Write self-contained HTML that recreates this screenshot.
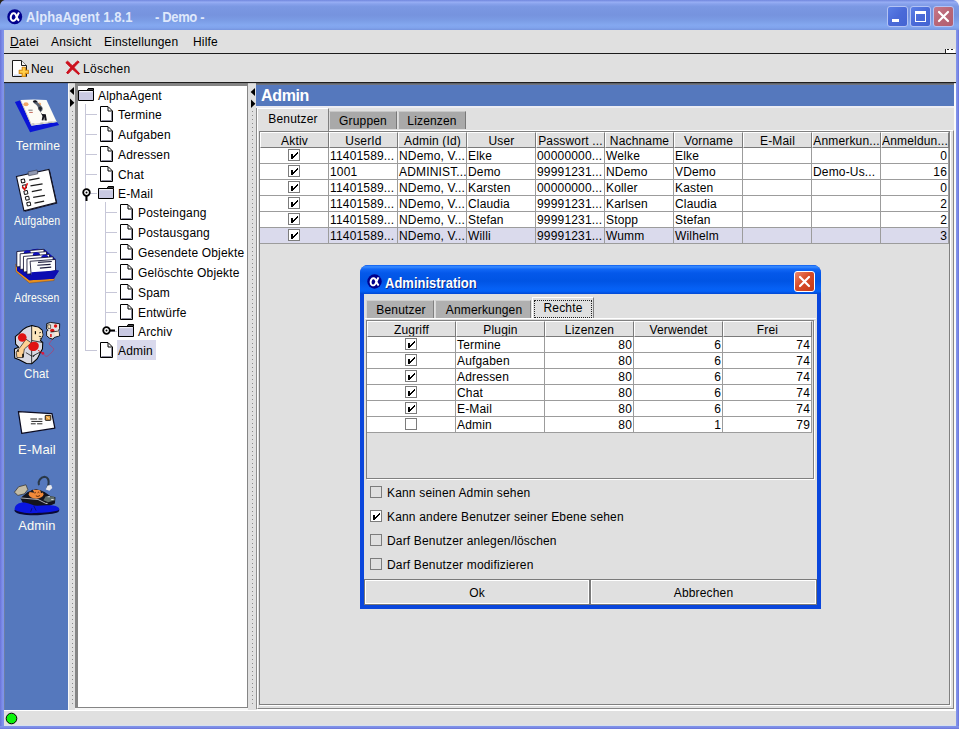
<!DOCTYPE html>
<html>
<head>
<meta charset="utf-8">
<title>AlphaAgent</title>
<style>
*{box-sizing:border-box;margin:0;padding:0}
html,body{width:959px;height:729px;overflow:hidden;background:#7486e2}
body{font-family:"Liberation Sans",sans-serif;font-size:12px;line-height:16px;color:#000;position:relative;letter-spacing:.17px}
.a{position:absolute}
svg{position:absolute;overflow:visible}
#title{left:0;top:0;width:959px;height:30px;background:linear-gradient(#748ade 0,#7e94e6 3%,#98aef4 7%,#88a2ec 13%,#7b98e3 22%,#7693de 50%,#7b9ce5 68%,#84a8f0 84%,#80a3ec 93%,#7694de 100%)}
#title .t{top:10px;color:#dfe8fb;font-weight:bold;font-size:13px;letter-spacing:.07px;white-space:pre;line-height:16px;transform:scaleY(1.09);transform-origin:0 12px}
#frameL{left:0;top:30px;width:4px;height:699px;background:linear-gradient(90deg,#6a74d8,#7d8eea 60%,#8296e8)}
#frameR{left:956px;top:30px;width:3px;height:699px;background:linear-gradient(90deg,#8296e8,#7d8eea 40%,#6a74d8)}
#frameB{left:0;top:726px;width:959px;height:3px;background:linear-gradient(#8296e8,#7b8ae6 50%,#6a74d8)}
#menubar{left:4px;top:30px;width:952px;height:23px;background:#e0e0e0}
#menubar span{position:absolute;top:4px}
#ml1{left:4px;top:53px;width:952px;height:1px;background:#1c1c1c}
#toolbar{left:4px;top:54px;width:952px;height:28px;background:#e0e0e0}
#toolbar span{position:absolute;top:7px}
#ml2{left:4px;top:82px;width:952px;height:1px;background:#1e1e1e}
#ml3{left:4px;top:83px;width:952px;height:1px;background:linear-gradient(90deg,#4f6ca8 0 64px,#c8c8c8 64px 71px,#808080 71px 244px,#c8c8c8 244px 252px,#5c6068 252px 950px,#ddd 950px)}
#sidebar{left:4px;top:84px;width:64px;height:626px;background:#5578bd;border-left:1px solid #6c7fa6}
.lbl{position:absolute;left:0;width:64px;text-align:center;color:#fdfdf4;font-size:12px;white-space:nowrap}
.lbl b{display:inline-block;font-weight:normal;transform-origin:50% 50%}
.divd{background:#e0e0e0}
#tree{left:75px;top:84px;width:173px;height:624px;background:#fff;border:solid #858585;border-width:2px 1px 1px 3px;box-shadow:0 2px 0 #f6f6f6}
.tr{position:absolute;left:0;white-space:nowrap}
.tr span{position:absolute;top:0;padding:0 1px}
#main{left:256px;top:84px;width:700px;border-right:2px solid #fafafa;height:626px;background:#e0e0e0}
#hdr{left:0;top:0px;width:698px;height:22px;border-top:1px solid #70747e;background:#5578bd}
#hdr span{position:absolute;left:5px;top:1px;color:#fff;font-weight:bold;font-size:16px;line-height:20px;letter-spacing:-.35px}
#status{left:4px;top:710px;width:952px;height:16px;background:#e0e0e0;border-top:1px solid #fff;border-bottom:1px solid #d6e0ee}
table{border-collapse:separate;border-spacing:0;table-layout:fixed;position:absolute}
td,th{height:16px;line-height:15px;font-size:12px;font-weight:normal;white-space:nowrap;overflow:hidden;padding:0 0 0 1px;text-align:left}
th{background:#e0e0e0;border-top:1px solid #fff;border-left:1px solid #fff;border-right:1px solid #7a7a7a;border-bottom:1px solid #7a7a7a;text-align:center;padding:0;line-height:14px}
th div{height:14px;line-height:16px}
td{background:#fff;border:0;box-shadow:inset -1px -1px 0 #9c9c9c;line-height:16px}
td.r{text-align:right;padding:0 2px 0 0}
td.c{text-align:center;padding:0}
tr.sel td{background:#dadaec}
.cb{display:inline-block;width:12px;height:12px;border:1px solid #7c7c7c;background:#fff;vertical-align:top;margin-top:1px;position:relative}
.cb.g{background:#e0e0e0}
.cb.g.on{background:#fff}
.cb.on:after{content:"";position:absolute;left:0;top:0;width:10px;height:10px;background:
 linear-gradient(#000,#000) 2px 4px/2px 5px no-repeat,
 linear-gradient(#000,#000) 4px 6px/1px 2px no-repeat,
 linear-gradient(#000,#000) 5px 5px/1px 2px no-repeat,
 linear-gradient(#000,#000) 6px 4px/1px 2px no-repeat,
 linear-gradient(#000,#000) 7px 3px/1px 2px no-repeat,
 linear-gradient(#000,#000) 8px 2px/1px 2px no-repeat}
.tab{position:absolute;text-align:center;white-space:nowrap}
#dlg{left:360px;top:265px;width:461px;height:344px;background:#0a46dc;border-radius:8px 8px 0 0}
#dtitle{left:0;top:0;width:461px;height:29px;border-radius:8px 8px 0 0;background:linear-gradient(#0a5cf0 0,#3a8cff 6%,#1268f6 14%,#0458ea 28%,#0054e4 55%,#0660f4 80%,#0462f8 90%,#0248d4 100%)}
#dtitle .t{left:25px;top:10.5px;color:#fff;font-weight:bold;font-size:13px;letter-spacing:0;white-space:pre;line-height:16px;text-shadow:1px 1px 0 #0a2a88;transform:scaleY(1.09);transform-origin:0 12px}
#dbody{left:4px;top:29px;width:453px;height:311px;background:#e0e0e0}
.chk{position:absolute;left:6px;white-space:nowrap}
.chk .cb{position:absolute;left:0;top:0;margin:0}
.chk span{position:absolute;left:17px;top:-1px}
.btn{position:absolute;top:285px;height:26px;background:#e0e0e0;border:1px solid #7a7a7a;text-align:center;line-height:26px;box-shadow:inset 1px 1px 0 #fff,inset -1px -1px 0 #fff}
</style>
</head>
<body>
<div id="title" class="a"><svg class="a" style="left:7px;top:8.5px" width="15.5" height="15.5" viewBox="0 0 16 16"><circle cx="8" cy="8" r="7.7" fill="#00008c"/><path d="M12.3 3.6 C11.2 5.6 10.6 7.2 9.4 9.6 C8.6 11.6 6.9 12.6 5.4 11.9 C3.6 11 3.4 7.9 4.6 6 C5.6 4.3 7.6 3.9 8.7 5.4 C9.6 6.8 10.3 10.4 12.4 12.2" fill="none" stroke="#fff" stroke-width="2.1" stroke-linecap="butt"/></svg><span class="a t" style="left:26px">AlphaAgent 1.8.1</span><span class="a t" style="left:155px;letter-spacing:-.35px">- Demo -</span>
<div class="a" style="left:887px;top:6px;width:21px;height:21px;border:1px solid #b4c3f4;border-radius:3px;background:linear-gradient(135deg,#5b7fe6,#4a6ad8 50%,#4464d2)"><div class="a" style="left:4px;top:12px;width:7px;height:3px;background:#fff"></div></div><div class="a" style="left:910px;top:6px;width:21px;height:21px;border:1px solid #b4c3f4;border-radius:3px;background:linear-gradient(135deg,#5b7fe6,#4a6ad8 50%,#4464d2)"><div class="a" style="left:4px;top:4px;width:11px;height:11px;border:1px solid #fff;border-top-width:3px"></div></div><div class="a" style="left:933px;top:6px;width:21px;height:21px;border:1px solid #b4c3f4;border-radius:3px;background:linear-gradient(135deg,#c8788a,#b86676 50%,#b25e70)"><svg class="a" style="left:0;top:0" width="19" height="19"><path d="M5 5L14 14M14 5L5 14" stroke="#fff" stroke-width="2.2" stroke-linecap="round"/></svg></div>
<svg class="a" style="left:0;top:0" width="8" height="8"><path d="M0 0H4.5Q1 1 0 5Z" fill="#2a2418"/></svg><svg class="a" style="left:951px;top:0" width="8" height="8"><path d="M8 0H2.5Q7 1 8 6Z" fill="#f4f4f8"/></svg>
</div>
<div id="frameL" class="a"></div><div id="frameR" class="a"></div><div id="frameB" class="a"></div>
<div id="menubar" class="a"><span style="left:6px"><u>D</u>atei</span><span style="left:47px">Ansicht</span><span style="left:100px">Einstellungen</span><span style="left:189px">Hilfe</span><div class="a" style="left:941px;top:19px;width:10px;height:4px;background:#fff;border-left:1px solid #222"></div><div class="a" style="left:943px;top:19px;width:8px;height:1px;background:repeating-linear-gradient(90deg,#222 0 2px,transparent 2px 4px)"></div></div>
<div id="ml1" class="a"></div>
<div id="toolbar" class="a">
<svg style="left:8px;top:6px" width="18" height="18" viewBox="0 0 18 18"><path d="M0.5 0.5H9.5L14.5 5.5V16.5H0.5Z" fill="#fff" stroke="#1a1a1a" stroke-width="1"/><path d="M9.5 0.5V5.5H14.5" fill="#f4f4f4" stroke="#1a1a1a"/><path d="M2 15.3H13.3V7" fill="none" stroke="#cdd8ee" stroke-width="1.5"/><path d="M10.2 7.2h3.2v3h3v3.2h-3v3h-3.2v-3h-3v-3.2h3z" fill="#ffcf48" stroke="#d48a14" stroke-width="1.1" stroke-linejoin="round"/></svg>
<span style="left:27px">Neu</span>
<svg style="left:61px;top:6px" width="16" height="16" viewBox="0 0 16 16"><path d="M0.8 2.6L2.6 1.2C5.5 3.6 10 8.6 14.6 13.6L13.6 14.6C9.4 11 4.6 6.6 0.8 2.6Z M12.6 1L14.2 2C10.8 5.4 6 10.6 3 13.8L1.6 12.8C4.6 8.6 9 4 12.6 1Z" fill="#cc0f1c" stroke="#cc0f1c" stroke-width="1" stroke-linejoin="round"/></svg>
<span style="left:79px;letter-spacing:.3px">Löschen</span>
</div><div id="ml2" class="a"></div><div id="ml3" class="a"></div>
<div id="sidebar" class="a">
<svg style="left:7px;top:10px" width="52" height="44" viewBox="0 0 862 729"><path d="M48 132L140 104L330 520L748 468L782 512L300 632Z" fill="#0a14d8"/><path d="M140 100L360 92L572 100L742 462L322 528Z" fill="#fdfcf6"/><path d="M146 112L326 520" stroke="#c8c4bc" stroke-width="16"/><path d="M340 505L730 455" stroke="#d0ccc0" stroke-width="14"/><ellipse cx="232" cy="170" rx="42" ry="32" fill="#f2a868"/><ellipse cx="456" cy="165" rx="28" ry="26" fill="#f2b078"/><path d="M345 120C365 95 415 100 425 135C440 150 480 190 500 215C520 250 500 290 470 300L430 250C440 230 420 200 400 180C380 160 350 150 345 120Z" fill="#596270"/><path d="M345 122C362 98 412 102 422 134L372 142Z" fill="#0e0e14"/><path d="M470 300L500 330L560 335L578 440L540 440L535 380L520 440L492 435L505 365Z" fill="#14141c"/><path d="M440 225L470 205L500 235L470 290Z" fill="#20242c"/><path d="M272 268h70" stroke="#444" stroke-width="12"/><path d="M285 305h60" stroke="#b03020" stroke-width="12"/><path d="M330 495h40M470 482h50M600 468h70" stroke="#888" stroke-width="10"/></svg><svg style="left:-1px;top:81px" width="64" height="70" viewBox="0 0 667 729"><path d="M140 128L478 52L556 400L218 486Z" fill="#14142c"/><path d="M130 120L468 45L545 392L208 478Z" fill="#fefefe" stroke="#101020" stroke-width="12"/><path d="M250 72L345 52L352 92L258 112Z" fill="#9098b0" stroke="#303040" stroke-width="6"/><rect x="180" y="148" width="36" height="36" fill="#fff" stroke="#000" stroke-width="9" transform="rotate(-12 198 166)"/><rect x="195" y="208" width="36" height="36" fill="#fff" stroke="#000" stroke-width="9" transform="rotate(-12 213 226)"/><rect x="210" y="268" width="36" height="36" fill="#fff" stroke="#000" stroke-width="9" transform="rotate(-12 228 286)"/><rect x="225" y="328" width="36" height="36" fill="#fff" stroke="#000" stroke-width="9" transform="rotate(-12 243 346)"/><rect x="240" y="388" width="36" height="36" fill="#fff" stroke="#000" stroke-width="9" transform="rotate(-12 258 406)"/><path d="M262 158L370 136" stroke="#1a1a1a" stroke-width="13"/><path d="M276 218L402 196" stroke="#1a1a1a" stroke-width="13"/><path d="M290 278L394 256" stroke="#1a1a1a" stroke-width="13"/><path d="M304 338L426 316" stroke="#1a1a1a" stroke-width="13"/><path d="M318 398L418 376" stroke="#1a1a1a" stroke-width="13"/><path d="M190 225L215 255L245 190" fill="none" stroke="#e01010" stroke-width="16"/></svg><svg style="left:7px;top:160px" width="52" height="44" viewBox="0 0 862 729"><path d="M62 330L66 458L288 648L698 606L704 556L290 590L108 430Z" fill="#e8901c" stroke="#7a3c08" stroke-width="6"/><path d="M80 128L540 86L722 250L732 430L778 442L692 574L290 602L84 442Z" fill="#0c0cb2"/><ellipse cx="420" cy="104" rx="105" ry="26" fill="#1010c0"/><path d="M80 125L530 88L530 340L80 380Z" fill="#fff" stroke="#101030" stroke-width="14" stroke-linejoin="round"/><ellipse cx="255" cy="150" rx="60" ry="46" fill="#1010c0"/><path d="M135 162L572 126L572 380L135 422Z" fill="#fff" stroke="#101030" stroke-width="14" stroke-linejoin="round"/><ellipse cx="405" cy="184" rx="60" ry="46" fill="#1010c0"/><path d="M190 206L622 170L622 420L190 466Z" fill="#fff" stroke="#101030" stroke-width="14" stroke-linejoin="round"/><ellipse cx="545" cy="222" rx="60" ry="46" fill="#1010c0"/><path d="M248 246L682 212L682 450L248 502Z" fill="#fff" stroke="#101030" stroke-width="14" stroke-linejoin="round"/><path d="M300 286L720 256L722 440L318 520Z" fill="#fdfdff" stroke="#101030" stroke-width="14" stroke-linejoin="round"/><path d="M84 384L290 530L318 520L322 470L722 440L778 442L692 574L290 602L84 442Z" fill="#0c0cb2"/><path d="M432 306L660 290M420 352L640 338M462 400L650 384" stroke="#1a1a3c" stroke-width="20"/></svg><svg style="left:7px;top:236px" width="52" height="44" viewBox="0 0 862 729"><path d="M330 92L440 120L500 170L512 250L470 340L510 370L505 480L470 540L420 640L330 725L240 722L120 660L45 630L40 480L110 450L60 400L55 275L120 220L180 160L240 120Z" fill="#d9d9e2" stroke="#000" stroke-width="17" stroke-linejoin="round"/><path d="M332 110L440 130L495 178L508 250L468 336L332 340Z" fill="#fde6bc"/><path d="M326 92V722" stroke="#000" stroke-width="13"/><path d="M330 340L500 372M335 600L470 530M230 540L330 600" stroke="#000" stroke-width="12"/><path d="M232 318L322 380L205 480L182 622L82 622L70 530L150 432Z" fill="#fdd094" stroke="#000" stroke-width="10" stroke-linejoin="round"/><circle cx="170" cy="290" r="72" fill="#e01212"/><path d="M270 430C290 360 400 330 440 400C460 470 400 520 340 515C290 505 262 470 270 430Z" fill="#e01212"/><rect x="378" y="185" width="20" height="50" fill="#000"/><path d="M450 215l30 -12M445 270l40 5M470 295v30" stroke="#000" stroke-width="12"/><rect x="90" y="490" width="20" height="40" fill="#000"/><rect x="170" y="560" width="24" height="60" fill="#000"/><path d="M350 610l25 -22" stroke="#000" stroke-width="14"/><path d="M430 500L500 545" stroke="#d01818" stroke-width="14"/><circle cx="512" cy="552" r="22" fill="#e0143c"/><path d="M520 560C545 600 575 615 600 590C640 550 700 510 690 475C670 440 620 420 615 395C625 365 655 345 668 322" fill="none" stroke="#c8305c" stroke-width="10"/><path d="M575 60L640 40L790 62L788 140L770 180L790 260L700 290L680 318L620 300L575 262L572 190L600 170L572 150Z" fill="#e4e0e0" stroke="#000" stroke-width="14" stroke-linejoin="round"/><path d="M590 80h50v60h-42z" fill="#fde6bc" stroke="#000" stroke-width="9"/><circle cx="722" cy="100" r="28" fill="#e01212"/><ellipse cx="668" cy="172" rx="36" ry="28" fill="#e01212"/><path d="M700 190L770 175L780 255L720 270Z" fill="#fde6d0"/><path d="M630 230h30v50h-30z" fill="#e03030"/><path d="M640 200L760 185" stroke="#000" stroke-width="12"/></svg><svg style="left:-1px;top:311px" width="64" height="70" viewBox="0 0 667 729"><path d="M150 172L500 195L530 345L185 400Z" fill="#fefefe" stroke="#0a0a20" stroke-width="13" stroke-linejoin="round"/><rect x="430" y="212" width="58" height="52" fill="#e8a040" stroke="#000" stroke-width="9" rx="6"/><path d="M448 225l25 25" stroke="#fff0c0" stroke-width="10"/><path d="M275 250h70M360 250h40M285 275h115M280 300h50M345 300h55" stroke="#1a1a1a" stroke-width="10"/></svg><svg style="left:7px;top:388px" width="52" height="44" viewBox="0 0 862 729"><path d="M445 205C430 150 470 90 540 80C600 85 615 140 605 200L590 260" fill="none" stroke="#2a3848" stroke-width="34" stroke-linecap="round"/><path d="M40 335L110 245L232 212L262 292L205 362L98 388Z" fill="#c4bca6" stroke="#33302a" stroke-width="12" stroke-linejoin="round"/><path d="M560 290L590 225L650 215L668 265L620 310Z" fill="#e8e8ec"/><path d="M140 430L260 330L400 280L540 330L640 400L720 420L712 520L600 570L200 560Z" fill="#14141e"/><ellipse cx="400" cy="368" rx="122" ry="74" fill="#f28a3a"/><path d="M290 330L340 290L372 345Z M470 300L520 335L480 350Z" fill="#1a1a22"/><path d="M370 350q14 -22 28 0M425 345q14 -22 28 0M395 395q35 24 70 -6" fill="none" stroke="#3a1400" stroke-width="13"/><path d="M520 470L560 400L700 405L712 470L600 500Z" fill="#5e6c68"/><path d="M145 430L430 455L560 520" fill="none" stroke="#d8d8e0" stroke-width="13"/><path d="M590 410h40M650 455h40M560 520h30" stroke="#f0f0f4" stroke-width="14"/><path d="M45 600C60 530 140 495 230 510C300 520 350 560 420 560C500 550 580 545 680 555C760 565 800 600 780 640C740 690 600 690 480 700C380 715 250 705 150 690C80 680 35 650 45 600Z" fill="#0a16e0"/><path d="M40 625C120 670 260 690 400 680C520 670 700 670 785 625L770 662C700 700 560 700 470 712C360 722 220 712 130 694C70 682 38 660 40 625Z" fill="#0a0a34"/><path d="M360 560L400 640M330 600l-20 60" stroke="#0a0a50" stroke-width="12"/></svg>
<div class="lbl" style="top:54px;font-size:12.6px;left:1px"><b style="transform:scaleX(0.97)">Termine</b></div>
<div class="lbl" style="top:129px;font-size:12.4px;left:0px"><b style="transform:scaleX(0.85)">Aufgaben</b></div>
<div class="lbl" style="top:206px;font-size:12.4px;left:0px"><b style="transform:scaleX(0.84)">Adressen</b></div>
<div class="lbl" style="top:282px;font-size:12.4px;left:-1px"><b style="transform:scaleX(0.93)">Chat</b></div>
<div class="lbl" style="top:358px;font-size:13px;left:0px"><b style="transform:scaleX(1.0)">E-Mail</b></div>
<div class="lbl" style="top:434px;font-size:13px;left:-0.5px"><b style="transform:scaleX(0.99)">Admin</b></div>
</div>
<div class="a divd" style="left:68px;top:84px;width:7px;height:626px;border-left:1px solid #f8f8f8"><svg class="a" style="left:-1px;top:0px" width="8" height="24"><path d="M6 3v8L1.6 7z" fill="#000"/><path d="M2 14.5v8.5L6.4 18.75z" fill="#000"/></svg><div class="a" style="left:3px;top:27px;width:1px;height:596px;background:repeating-linear-gradient(#8a8a8a 0 1px,transparent 1px 4px)"></div></div>
<div id="tree" class="a">
<div class="a" style="left:7px;top:18px;width:1px;height:247px;background:#c7c7d8"></div>
<div class="a" style="left:27px;top:116px;width:1px;height:130px;background:#c7c7d8"></div>
<svg style="left:0px;top:2px" width="16" height="14" viewBox="0 0 16 14"><path d="M9 2.5L10.2 0.5H15.5V2.5" fill="#dcdcec" stroke="#000"/><path d="M10 1H15.5" stroke="#000" stroke-width="1.4"/><path d="M0.5 2.5H15.5V12.5H0.5Z" fill="#c9c9e2" stroke="#000"/><path d="M1.5 3.6H14.5" stroke="#f2f2fa" stroke-width="1.2"/></svg>
<div class="tr" style="left:19px;top:0px;height:18px;line-height:20px;padding:0 3px 0 1px">AlphaAgent</div>
<div class="a" style="left:7px;top:28px;width:12px;height:1px;background:#c7c7d8"></div>
<svg style="left:20px;top:20px" width="16" height="16" viewBox="0 0 16 16"><path d="M2.5 0.5H10L14.5 5V15.5H2.5Z" fill="#fff" stroke="#000"/><path d="M10 1V5H14" fill="none" stroke="#000"/><path d="M3.5 14.5H13.5V6" fill="none" stroke="#8c8c9c" stroke-width="1"/></svg>
<div class="tr" style="left:39px;top:18px;height:20px;line-height:22px;padding:0 3px 0 1px">Termine</div>
<div class="a" style="left:7px;top:48px;width:12px;height:1px;background:#c7c7d8"></div>
<svg style="left:20px;top:40px" width="16" height="16" viewBox="0 0 16 16"><path d="M2.5 0.5H10L14.5 5V15.5H2.5Z" fill="#fff" stroke="#000"/><path d="M10 1V5H14" fill="none" stroke="#000"/><path d="M3.5 14.5H13.5V6" fill="none" stroke="#8c8c9c" stroke-width="1"/></svg>
<div class="tr" style="left:39px;top:38px;height:20px;line-height:22px;padding:0 3px 0 1px">Aufgaben</div>
<div class="a" style="left:7px;top:68px;width:12px;height:1px;background:#c7c7d8"></div>
<svg style="left:20px;top:60px" width="16" height="16" viewBox="0 0 16 16"><path d="M2.5 0.5H10L14.5 5V15.5H2.5Z" fill="#fff" stroke="#000"/><path d="M10 1V5H14" fill="none" stroke="#000"/><path d="M3.5 14.5H13.5V6" fill="none" stroke="#8c8c9c" stroke-width="1"/></svg>
<div class="tr" style="left:39px;top:58px;height:20px;line-height:22px;padding:0 3px 0 1px">Adressen</div>
<div class="a" style="left:7px;top:88px;width:12px;height:1px;background:#c7c7d8"></div>
<svg style="left:20px;top:80px" width="16" height="16" viewBox="0 0 16 16"><path d="M2.5 0.5H10L14.5 5V15.5H2.5Z" fill="#fff" stroke="#000"/><path d="M10 1V5H14" fill="none" stroke="#000"/><path d="M3.5 14.5H13.5V6" fill="none" stroke="#8c8c9c" stroke-width="1"/></svg>
<div class="tr" style="left:39px;top:78px;height:20px;line-height:22px;padding:0 3px 0 1px">Chat</div>
<div class="a" style="left:7px;top:107px;width:12px;height:1px;background:#c7c7d8"></div>
<svg style="left:20px;top:100px" width="16" height="14" viewBox="0 0 16 14"><path d="M9 2.5L10.2 0.5H15.5V2.5" fill="#dcdcec" stroke="#000"/><path d="M10 1H15.5" stroke="#000" stroke-width="1.4"/><path d="M0.5 2.5H15.5V12.5H0.5Z" fill="#c9c9e2" stroke="#000"/><path d="M1.5 3.6H14.5" stroke="#f2f2fa" stroke-width="1.2"/></svg>
<svg style="left:3.7px;top:101.5px" width="14" height="14" viewBox="0 0 14 14"><path d="M4.5 7v6" stroke="#000" stroke-width="2"/><circle cx="4.5" cy="4.5" r="3.3" fill="#fff" stroke="#000" stroke-width="1.8"/><circle cx="4.5" cy="4.5" r="1" fill="#000"/></svg>
<div class="tr" style="left:39px;top:98px;height:18px;line-height:20px;padding:0 3px 0 1px">E-Mail</div>
<div class="a" style="left:27px;top:126px;width:12px;height:1px;background:#c7c7d8"></div>
<svg style="left:40px;top:118px" width="16" height="16" viewBox="0 0 16 16"><path d="M2.5 0.5H10L14.5 5V15.5H2.5Z" fill="#fff" stroke="#000"/><path d="M10 1V5H14" fill="none" stroke="#000"/><path d="M3.5 14.5H13.5V6" fill="none" stroke="#8c8c9c" stroke-width="1"/></svg>
<div class="tr" style="left:59px;top:116px;height:20px;line-height:22px;padding:0 3px 0 1px">Posteingang</div>
<div class="a" style="left:27px;top:146px;width:12px;height:1px;background:#c7c7d8"></div>
<svg style="left:40px;top:138px" width="16" height="16" viewBox="0 0 16 16"><path d="M2.5 0.5H10L14.5 5V15.5H2.5Z" fill="#fff" stroke="#000"/><path d="M10 1V5H14" fill="none" stroke="#000"/><path d="M3.5 14.5H13.5V6" fill="none" stroke="#8c8c9c" stroke-width="1"/></svg>
<div class="tr" style="left:59px;top:136px;height:20px;line-height:22px;padding:0 3px 0 1px">Postausgang</div>
<div class="a" style="left:27px;top:166px;width:12px;height:1px;background:#c7c7d8"></div>
<svg style="left:40px;top:158px" width="16" height="16" viewBox="0 0 16 16"><path d="M2.5 0.5H10L14.5 5V15.5H2.5Z" fill="#fff" stroke="#000"/><path d="M10 1V5H14" fill="none" stroke="#000"/><path d="M3.5 14.5H13.5V6" fill="none" stroke="#8c8c9c" stroke-width="1"/></svg>
<div class="tr" style="left:59px;top:156px;height:20px;line-height:22px;padding:0 3px 0 1px">Gesendete Objekte</div>
<div class="a" style="left:27px;top:186px;width:12px;height:1px;background:#c7c7d8"></div>
<svg style="left:40px;top:178px" width="16" height="16" viewBox="0 0 16 16"><path d="M2.5 0.5H10L14.5 5V15.5H2.5Z" fill="#fff" stroke="#000"/><path d="M10 1V5H14" fill="none" stroke="#000"/><path d="M3.5 14.5H13.5V6" fill="none" stroke="#8c8c9c" stroke-width="1"/></svg>
<div class="tr" style="left:59px;top:176px;height:20px;line-height:22px;padding:0 3px 0 1px">Gelöschte Objekte</div>
<div class="a" style="left:27px;top:206px;width:12px;height:1px;background:#c7c7d8"></div>
<svg style="left:40px;top:198px" width="16" height="16" viewBox="0 0 16 16"><path d="M2.5 0.5H10L14.5 5V15.5H2.5Z" fill="#fff" stroke="#000"/><path d="M10 1V5H14" fill="none" stroke="#000"/><path d="M3.5 14.5H13.5V6" fill="none" stroke="#8c8c9c" stroke-width="1"/></svg>
<div class="tr" style="left:59px;top:196px;height:20px;line-height:22px;padding:0 3px 0 1px">Spam</div>
<div class="a" style="left:27px;top:226px;width:12px;height:1px;background:#c7c7d8"></div>
<svg style="left:40px;top:218px" width="16" height="16" viewBox="0 0 16 16"><path d="M2.5 0.5H10L14.5 5V15.5H2.5Z" fill="#fff" stroke="#000"/><path d="M10 1V5H14" fill="none" stroke="#000"/><path d="M3.5 14.5H13.5V6" fill="none" stroke="#8c8c9c" stroke-width="1"/></svg>
<div class="tr" style="left:59px;top:216px;height:20px;line-height:22px;padding:0 3px 0 1px">Entwürfe</div>
<div class="a" style="left:27px;top:245px;width:12px;height:1px;background:#c7c7d8"></div>
<svg style="left:40px;top:238px" width="16" height="14" viewBox="0 0 16 14"><path d="M9 2.5L10.2 0.5H15.5V2.5" fill="#dcdcec" stroke="#000"/><path d="M10 1H15.5" stroke="#000" stroke-width="1.4"/><path d="M0.5 2.5H15.5V12.5H0.5Z" fill="#c9c9e2" stroke="#000"/><path d="M1.5 3.6H14.5" stroke="#f2f2fa" stroke-width="1.2"/></svg>
<svg style="left:23.7px;top:239.5px" width="14" height="14" viewBox="0 0 14 14"><path d="M7 4.5h6" stroke="#000" stroke-width="2"/><circle cx="4.5" cy="4.5" r="3.3" fill="#fff" stroke="#000" stroke-width="1.8"/><circle cx="4.5" cy="4.5" r="1" fill="#000"/></svg>
<div class="tr" style="left:59px;top:236px;height:18px;line-height:20px;padding:0 3px 0 1px">Archiv</div>
<div class="a" style="left:7px;top:264px;width:12px;height:1px;background:#c7c7d8"></div>
<svg style="left:20px;top:256px" width="16" height="16" viewBox="0 0 16 16"><path d="M2.5 0.5H10L14.5 5V15.5H2.5Z" fill="#fff" stroke="#000"/><path d="M10 1V5H14" fill="none" stroke="#000"/><path d="M3.5 14.5H13.5V6" fill="none" stroke="#8c8c9c" stroke-width="1"/></svg>
<div class="tr" style="left:39px;top:254px;height:20px;line-height:22px;background:#d9d9ec;padding:0 3px 0 1px">Admin</div>
</div>
<div class="a divd" style="left:248px;top:84px;width:8px;height:626px"><svg class="a" style="left:1px;top:1px" width="8" height="24"><path d="M6 3v8L1.6 7z" fill="#000"/><path d="M2 14.5v8.5L6.4 18.75z" fill="#000"/></svg><div class="a" style="left:4px;top:27px;width:1px;height:596px;background:repeating-linear-gradient(#8a8a8a 0 1px,transparent 1px 4px)"></div></div>
<div id="main" class="a"><div id="hdr" class="a"><span>Admin</span></div>
<div class="a" style="left:0;top:22px;width:698px;height:2px;background:#ececf2"></div>
<div class="a" style="left:0px;top:24px;width:1px;height:601px;background:#8c8c8c"></div><div class="a" style="left:1px;top:46px;width:697px;height:579px;border-top:1px solid #fff;border-left:1px solid #fff;border-right:1px solid #868686;border-bottom:1px solid #868686;box-shadow:0 1px 0 #fff"></div>
<div class="tab" style="left:1px;top:24px;width:72px;height:23px;background:#e0e0e0;border-top:1px solid #fff;border-left:1px solid #fff;border-right:1px solid #808080;line-height:21px">Benutzer</div>
<div class="tab" style="left:73px;top:27px;width:68px;height:18px;background:#a9a9a9;border-top:1px solid #c8c8c8;border-left:1px solid #d8d8d8;border-right:1px solid #787878;line-height:19px">Gruppen</div>
<div class="tab" style="left:142px;top:27px;width:68px;height:18px;background:#a9a9a9;border-top:1px solid #c8c8c8;border-left:1px solid #d8d8d8;border-right:1px solid #787878;line-height:19px">Lizenzen</div>
<div class="a" style="left:3px;top:47px;width:691px;height:574px;border:1px solid #808080;box-shadow:1px 1px 0 #fff;background:#e0e0e0"></div>
<table style="left:4px;top:48px;width:689px"><colgroup><col style="width:69px"><col style="width:69px"><col style="width:69px"><col style="width:69px"><col style="width:69px"><col style="width:69px"><col style="width:69px"><col style="width:69px"><col style="width:69px"><col style="width:68px"></colgroup>
<tr><th><div>Aktiv</div></th><th><div>UserId</div></th><th><div>Admin (Id)</div></th><th><div>User</div></th><th><div>Passwort ...</div></th><th><div>Nachname</div></th><th><div>Vorname</div></th><th><div>E-Mail</div></th><th><div>Anmerkun...</div></th><th><div>Anmeldun...</div></th></tr>
<tr><td class="c"><i class="cb on" style="margin-left:-2px"></i></td><td>11401589...</td><td>NDemo, V...</td><td>Elke</td><td>00000000...</td><td>Welke</td><td>Elke</td><td></td><td></td><td class="r">0</td></tr>
<tr><td class="c"><i class="cb on" style="margin-left:-2px"></i></td><td>1001</td><td>ADMINIST...</td><td>Demo</td><td>99991231...</td><td>NDemo</td><td>VDemo</td><td></td><td>Demo-Us...</td><td class="r">16</td></tr>
<tr><td class="c"><i class="cb on" style="margin-left:-2px"></i></td><td>11401589...</td><td>NDemo, V...</td><td>Karsten</td><td>00000000...</td><td>Koller</td><td>Kasten</td><td></td><td></td><td class="r">0</td></tr>
<tr><td class="c"><i class="cb on" style="margin-left:-2px"></i></td><td>11401589...</td><td>NDemo, V...</td><td>Claudia</td><td>99991231...</td><td>Karlsen</td><td>Claudia</td><td></td><td></td><td class="r">2</td></tr>
<tr><td class="c"><i class="cb on" style="margin-left:-2px"></i></td><td>11401589...</td><td>NDemo, V...</td><td>Stefan</td><td>99991231...</td><td>Stopp</td><td>Stefan</td><td></td><td></td><td class="r">2</td></tr>
<tr class="sel"><td class="c"><i class="cb on" style="margin-left:-2px"></i></td><td>11401589...</td><td>NDemo, V...</td><td>Willi</td><td>99991231...</td><td>Wumm</td><td>Wilhelm</td><td></td><td></td><td class="r">3</td></tr>
</table>
</div>
<div id="status" class="a"><svg style="left:1px;top:1px" width="13" height="13"><circle cx="6.5" cy="6.5" r="5.3" fill="#0cf40c" stroke="#000" stroke-width="1"/></svg></div>
<div id="dlg" class="a"><div id="dtitle" class="a"><svg class="a" style="left:7px;top:8.5px" width="15" height="15" viewBox="0 0 16 16"><circle cx="8" cy="8" r="7.7" fill="#00008c"/><path d="M12.3 3.6 C11.2 5.6 10.6 7.2 9.4 9.6 C8.6 11.6 6.9 12.6 5.4 11.9 C3.6 11 3.4 7.9 4.6 6 C5.6 4.3 7.6 3.9 8.7 5.4 C9.6 6.8 10.3 10.4 12.4 12.2" fill="none" stroke="#fff" stroke-width="2.1" stroke-linecap="butt"/></svg><span class="a t">Administration</span>
<div class="a" style="left:434px;top:6px;width:21px;height:21px;border:1px solid #fff;border-radius:3px;background:linear-gradient(135deg,#ec8a6e,#d84c28 45%,#c43a18)"><svg class="a" style="left:0;top:0" width="19" height="19"><path d="M5 5L14 14M14 5L5 14" stroke="#fff" stroke-width="2.2" stroke-linecap="round"/></svg></div>
</div><div id="dbody" class="a">
<div class="tab" style="left:2px;top:6px;width:68px;height:18px;background:#b0b0b0;border-top:1px solid #d0d0d0;border-left:1px solid #d8d8d8;border-right:1px solid #808080;line-height:18px;padding-left:2px">Benutzer</div>
<div class="tab" style="left:71px;top:6px;width:96px;height:18px;background:#b0b0b0;border-top:1px solid #d0d0d0;border-left:1px solid #d8d8d8;border-right:1px solid #808080;line-height:18px;padding-left:2px">Anmerkungen</div>
<div class="tab" style="left:168px;top:3px;width:62px;height:22px;background:#e0e0e0;border-top:1px solid #fff;border-left:1px solid #fff;border-right:1px solid #808080;line-height:20px">Rechte<div class="a" style="left:1px;top:2px;width:58px;height:18px;border:1px dotted #222"></div></div>
<div class="a" style="left:1px;top:24px;width:451px;height:1px;background:#fff"></div>
<div class="a" style="left:2px;top:26px;width:448px;height:159px;border:1px solid #808080;box-shadow:1px 1px 0 #fff;background:#e0e0e0"></div>
<table style="left:3px;top:27px;width:445px"><colgroup><col style="width:89px"><col style="width:89px"><col style="width:89px"><col style="width:89px"><col style="width:89px"></colgroup>
<tr><th><div>Zugriff</div></th><th><div>Plugin</div></th><th><div>Lizenzen</div></th><th><div>Verwendet</div></th><th><div>Frei</div></th></tr>
<tr><td class="c"><i class="cb on" style="margin-left:-2px"></i></td><td>Termine</td><td class="r">80</td><td class="r">6</td><td class="r">74</td></tr>
<tr><td class="c"><i class="cb on" style="margin-left:-2px"></i></td><td>Aufgaben</td><td class="r">80</td><td class="r">6</td><td class="r">74</td></tr>
<tr><td class="c"><i class="cb on" style="margin-left:-2px"></i></td><td>Adressen</td><td class="r">80</td><td class="r">6</td><td class="r">74</td></tr>
<tr><td class="c"><i class="cb on" style="margin-left:-2px"></i></td><td>Chat</td><td class="r">80</td><td class="r">6</td><td class="r">74</td></tr>
<tr><td class="c"><i class="cb on" style="margin-left:-2px"></i></td><td>E-Mail</td><td class="r">80</td><td class="r">6</td><td class="r">74</td></tr>
<tr><td class="c"><i class="cb" style="margin-left:-2px"></i></td><td>Admin</td><td class="r">80</td><td class="r">1</td><td class="r">79</td></tr>
</table>
<div class="chk" style="top:192px"><i class="cb g"></i><span>Kann seinen Admin sehen</span></div>
<div class="chk" style="top:216px"><i class="cb g on"></i><span>Kann andere Benutzer seiner Ebene sehen</span></div>
<div class="chk" style="top:240px"><i class="cb g"></i><span>Darf Benutzer anlegen/löschen</span></div>
<div class="chk" style="top:264px"><i class="cb g"></i><span>Darf Benutzer modifizieren</span></div>
<div class="btn" style="left:0;width:226px">Ok</div><div class="btn" style="left:226px;width:227px">Abbrechen</div>
</div></div>
</body>
</html>
